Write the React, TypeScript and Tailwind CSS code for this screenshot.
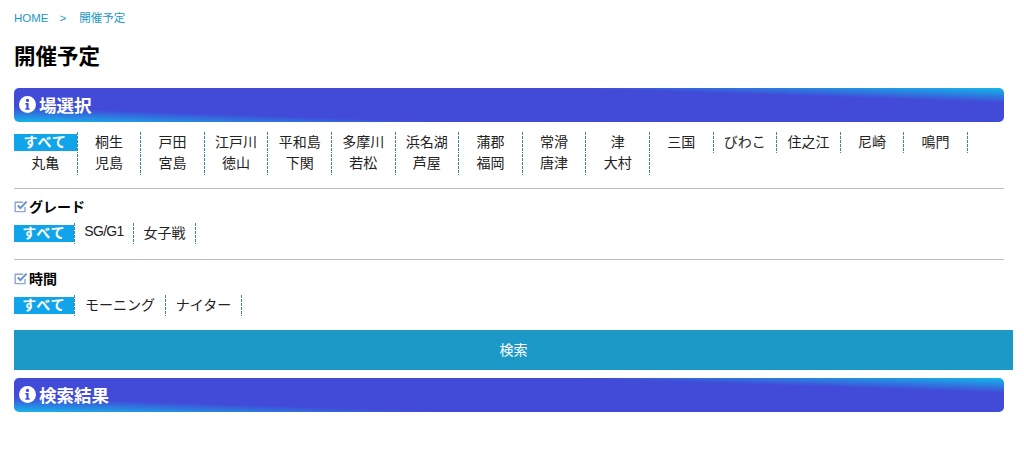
const venues = [
  "すべて", "桐生", "戸田", "江戸川", "平和島", "多摩川", "浜名湖", "蒲郡", "常滑", "津", "三国", "びわこ", "住之江", "尼崎", "鳴門",
  "丸亀", "児島", "宮島", "徳山", "下関", "若松", "芦屋", "福岡", "唐津", "大村",
];

function InfoIcon() {
  return (
    <svg width="17" height="17" viewBox="0 0 16 16" className="mt-[-2px] shrink-0">
      <circle cx="8" cy="8" r="8" fill="#fff" />
      <circle cx="8" cy="4.2" r="1.5" fill="#414bd8" />
      <path d="M6 6.7h3v4.9h1v1.3H6v-1.3h1V8H6z" fill="#414bd8" />
    </svg>
  );
}

function SectionBar({ title }: { title: string }) {
  return (
    <div className="flex h-[34px] w-[990px] items-center gap-[3px] rounded-[5px] bg-[linear-gradient(to_bottom_left,#14b8ea_0%,#414bd8_22%,#414bd8_78%,#14b8ea_100%)] pl-[5px] text-[17.5px] font-bold text-white">
      <InfoIcon />
      <span className="mt-[3px]">{title}</span>
    </div>
  );
}

function CheckIcon() {
  return (
    <svg width="14" height="14" viewBox="0 0 14 14" className="shrink-0">
      <path d="M11 7v4.6H1.2V2.2h8" fill="none" stroke="#8ea6d8" strokeWidth="1.4" />
      <path d="M3.8 5.4l2.6 2.8L12.6 1.6" fill="none" stroke="#5f8fd0" strokeWidth="1.9" />
    </svg>
  );
}

// the separator is a repeated gradient since a 1px dashed border has longer gaps than the site's
function Chip({ label, active, className }: { label: string; active?: boolean; className: string }) {
  return (
    <div className={`flex items-center justify-center bg-[linear-gradient(#3d8a9c_65%,transparent_65%)] bg-[length:1px_4px] bg-right bg-repeat-y pr-[1px] ${className}`}>
      {active ? (
        <span className="flex h-[17px] w-full items-center justify-center bg-[#10a5ea] font-bold leading-none tracking-[1px] text-white">{label}</span>
      ) : (
        <span className="whitespace-nowrap">{label}</span>
      )}
    </div>
  );
}

function FilterGroup({ title, items }: { title: string; items: { label: string; width: string }[] }) {
  return (
    <div>
      <div className="flex h-[20px] items-center text-[14px] font-bold text-black">
        <CheckIcon />
        <span className="ml-[1px]">{title}</span>
      </div>
      <div className="mt-[5px] flex text-[14px] text-[#222]">
        {items.map((item, i) => (
          <Chip key={item.label} label={item.label} active={i === 0} className={`h-[22px] ${item.width}`} />
        ))}
      </div>
    </div>
  );
}

export default function App() {
  return (
    <div className="h-[454px] w-[1024px] overflow-hidden bg-white pl-[14px] font-['Liberation_Sans','Noto_Sans_CJK_JP',sans-serif]">
      <div className="flex h-[37px] items-center text-[11.5px] text-[#1c99c6]">
        <span>HOME</span>
        <span className="ml-[11px]">&gt;</span>
        <span className="ml-[13px]">開催予定</span>
      </div>
      <h1 className="flex h-[41px] items-center text-[21.5px] font-bold text-black">開催予定</h1>
      <div className="mt-[10px]">
        <SectionBar title="場選択" />
      </div>

      <div className="mt-[9px] flex w-[960px] flex-wrap text-[14px] text-[#222]">
        {venues.map((v, i) => (
          <Chip key={v} label={v} active={i === 0} className={i < 15 ? "h-[22px] w-[63.6px]" : "h-[22px] w-[63.6px] pb-[2px]"} />
        ))}
      </div>

      <hr className="mt-[13px] w-[990px] border-t border-[#bbb]" />
      <div className="mt-[8px]">
        <FilterGroup
          title="グレード"
          items={[
            { label: "すべて", width: "w-[61px]" },
            { label: "SG/G1", width: "w-[59px] pb-[3px] tracking-[-0.7px]" },
            { label: "女子戦", width: "w-[62px]" },
          ]}
        />
      </div>

      <hr className="mt-[15px] w-[990px] border-t border-[#bbb]" />
      <div className="mt-[9px]">
        <FilterGroup
          title="時間"
          items={[
            { label: "すべて", width: "w-[61px]" },
            { label: "モーニング", width: "w-[91px]" },
            { label: "ナイター", width: "w-[76px]" },
          ]}
        />
      </div>

      <button className="mt-[14px] block h-[40px] w-[999px] bg-[#1c99c6] text-[14px] text-white">検索</button>
      <div className="mt-[8px]">
        <SectionBar title="検索結果" />
      </div>
    </div>
  );
}
